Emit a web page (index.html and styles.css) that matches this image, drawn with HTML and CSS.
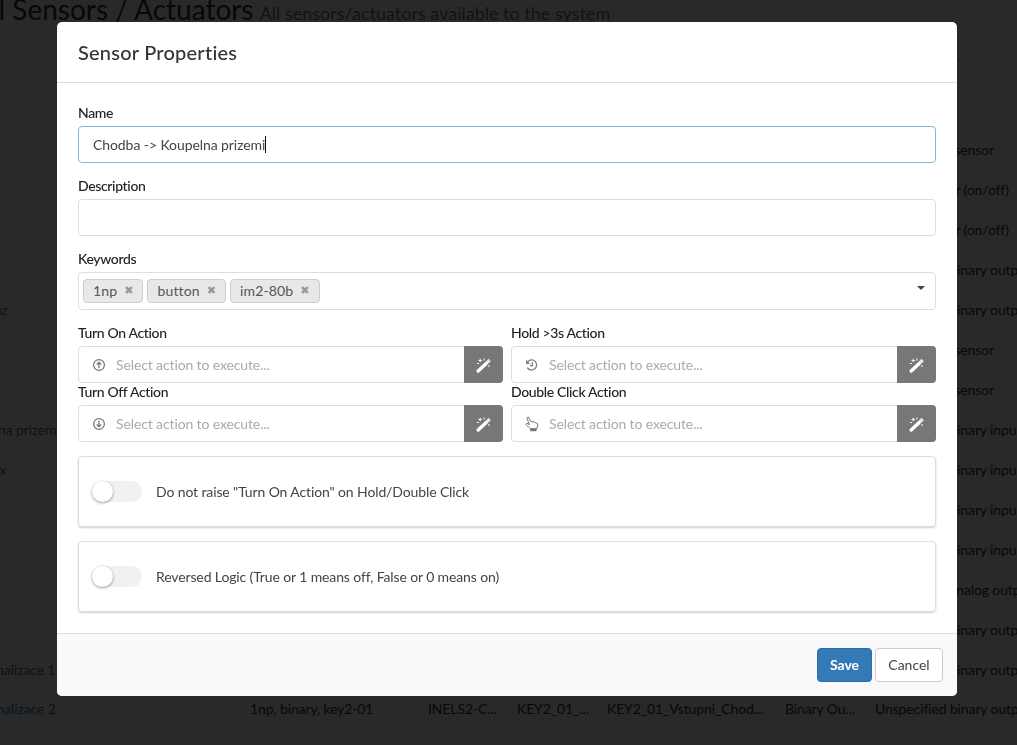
FILE: index.html
```html
<!DOCTYPE html>
<html lang="en">
<head>
<meta charset="utf-8">
<title>Sensors / Actuators</title>
<link rel="stylesheet" href="styles.css">
</head>
<body>
<main class="page">
  <header class="page-head">
    <h1 class="page-title">All Sensors / Actuators <small class="page-sub">All sensors/actuators available to the system</small></h1>
  </header>
  <div class="toolbar"><div class="search">Search...</div></div>
  <table class="grid">
    <colgroup><col class="c1"><col class="c2"><col class="c3"><col class="c4"><col class="c5"><col class="c6"><col class="c7"></colgroup>
    <thead><tr><th>Name</th><th>Keywords</th><th>Driver</th><th>Address</th><th>Label</th><th>Type</th><th>Description</th></tr></thead>
    <tbody>
      <tr><td></td><td></td><td></td><td></td><td></td><td></td><td>Temperature sensor</td></tr>
      <tr><td></td><td></td><td></td><td></td><td></td><td></td><td>Relay actuator (on/off)</td></tr>
      <tr><td></td><td></td><td></td><td></td><td></td><td></td><td>Relay actuator (on/off)</td></tr>
      <tr><td></td><td></td><td></td><td></td><td></td><td></td><td>Unspecified binary output</td></tr>
      <tr><td><a href="#">Osvetleni pro Garaz</a></td><td></td><td></td><td></td><td></td><td></td><td>Unspecified binary output</td></tr>
      <tr><td></td><td></td><td></td><td></td><td></td><td></td><td>Temperature sensor</td></tr>
      <tr><td></td><td></td><td></td><td></td><td></td><td></td><td>Temperature sensor</td></tr>
      <tr><td><a href="#">Chodba -&gt; Koupelna prizemi</a></td><td></td><td></td><td></td><td></td><td></td><td>Unspecified binary input</td></tr>
      <tr><td><a href="#">Kuchyn - Bojler box</a></td><td></td><td></td><td></td><td></td><td></td><td>Unspecified binary input</td></tr>
      <tr><td></td><td></td><td></td><td></td><td></td><td></td><td>Unspecified binary input</td></tr>
      <tr><td></td><td></td><td></td><td></td><td></td><td></td><td>Unspecified binary input</td></tr>
      <tr><td></td><td></td><td></td><td></td><td></td><td></td><td>Unspecified analog output</td></tr>
      <tr><td></td><td></td><td></td><td></td><td></td><td></td><td>Unspecified binary output</td></tr>
      <tr><td><a href="#">Vstupni dvere: Signalizace 1</a></td><td></td><td></td><td></td><td></td><td></td><td>Unspecified binary output</td></tr>
      <tr class="last"><td><a href="#">Vstupni dvere: Signalizace 2</a></td><td>1np, binary, key2-01</td><td>INELS2-C...</td><td>KEY2_01_...</td><td>KEY2_01_Vstupni_Chod...</td><td>Binary Ou...</td><td>Unspecified binary output</td></tr>
    </tbody>
  </table>
</main>

<div class="backdrop"></div>

<section class="modal">
  <header class="modal-head"><h2 class="modal-title">Sensor Properties</h2></header>
  <div class="modal-body">
    <div class="field">
      <label class="label">Name</label>
      <div class="control focused">Chodba -&gt; Koupelna prizemi<span class="caret"></span></div>
    </div>
    <div class="field">
      <label class="label">Description</label>
      <div class="control"></div>
    </div>
    <div class="field">
      <label class="label">Keywords</label>
      <div class="tags">
        <span class="tag">1np<span class="tag-x">✖</span></span>
        <span class="tag">button<span class="tag-x">✖</span></span>
        <span class="tag">im2-80b<span class="tag-x">✖</span></span>
        <span class="arrow"></span>
      </div>
    </div>
    <div class="actions">
      <div>
        <label class="label">Turn On Action</label>
        <div class="picker">
          <svg class="ico" viewBox="0 0 14 14"><circle cx="7" cy="7" r="5.4"/><path d="M7 10.2V4.4M4.7 6.6 7 4.2l2.3 2.4"/></svg>
          <span class="ph">Select action to execute...</span>
          <span class="wand"><svg viewBox="0 0 16 16"><path class="stick" d="M2.200 14 10.200 6.400"/><path class="tip" d="M11.200 5.400 13.800 3"/><path class="spark" d="M2.500 3.500h3.500M4.200 1.800v3.400M8 1.500v2M13 8v2M1 6.500h2"/></svg></span>
        </div>
      </div>
      <div>
        <label class="label">Hold &gt;3s Action</label>
        <div class="picker">
          <svg class="ico" viewBox="0 0 14 14"><path d="M2.900 3.600A5 5 0 1 1 2.300 9.600"/><path class="solid" d="M1.200 1.800 5.300 5.700 1.200 5.900z"/><path d="M7.300 4.200V7.500H5"/></svg>
          <span class="ph">Select action to execute...</span>
          <span class="wand"><svg viewBox="0 0 16 16"><path class="stick" d="M2.200 14 10.200 6.400"/><path class="tip" d="M11.200 5.400 13.800 3"/><path class="spark" d="M2.500 3.500h3.500M4.200 1.800v3.400M8 1.500v2M13 8v2M1 6.500h2"/></svg></span>
        </div>
      </div>
      <div>
        <label class="label">Turn Off Action</label>
        <div class="picker">
          <svg class="ico" viewBox="0 0 14 14"><circle cx="7" cy="7" r="5.4"/><path d="M7 3.800V9.600M4.700 7.400 7 9.800l2.300-2.400"/></svg>
          <span class="ph">Select action to execute...</span>
          <span class="wand"><svg viewBox="0 0 16 16"><path class="stick" d="M2.200 14 10.200 6.400"/><path class="tip" d="M11.200 5.400 13.800 3"/><path class="spark" d="M2.500 3.500h3.500M4.200 1.800v3.400M8 1.500v2M13 8v2M1 6.500h2"/></svg></span>
        </div>
      </div>
      <div>
        <label class="label">Double Click Action</label>
        <div class="picker">
          <svg class="ico hand" viewBox="0 0 14 16"><path d="M3 .8 6 5.600 9 5.800 12.800 8 12 12.600H5.200L.8 8.200l1-1L4.400 8.600 1.800 2z"/><path class="solid" d="M5.200 13h6.400v2.200H5.200z"/></svg>
          <span class="ph">Select action to execute...</span>
          <span class="wand"><svg viewBox="0 0 16 16"><path class="stick" d="M2.200 14 10.200 6.400"/><path class="tip" d="M11.200 5.400 13.800 3"/><path class="spark" d="M2.500 3.500h3.500M4.200 1.800v3.400M8 1.500v2M13 8v2M1 6.500h2"/></svg></span>
        </div>
      </div>
    </div>
    <div class="card"><span class="switch"><span class="knob"></span></span><span class="card-text">Do not raise "Turn On Action" on Hold/Double Click</span></div>
    <div class="card"><span class="switch"><span class="knob"></span></span><span class="card-text">Reversed Logic (True or 1 means off, False or 0 means on)</span></div>
  </div>
  <footer class="modal-foot">
    <button class="btn save">Save</button>
    <button class="btn cancel">Cancel</button>
  </footer>
</section>
</body>
</html>
```
FILE: styles.css
```css
* { box-sizing: border-box; }
html, body { margin: 0; height: 100%; overflow: hidden; background: #fff; }
body { font: 14px/20px Lato, "Open Sans", sans-serif; color: #333; letter-spacing: -.12px; }

.page { width: 1132px; margin-left: -115px; height: 745px; overflow: hidden; }
.page-head { display: flow-root; height: 29px; border-bottom: 1px solid #ddd; padding-left: 88px; }
.page-title { margin: -9px 0 0; font-size: 28px; line-height: 36px; font-weight: 400; white-space: nowrap; letter-spacing: 0; }
.page-sub { font-size: 18px; color: #777; margin-left: -1px; }
.toolbar { height: 53px; padding-top: 9px; border-bottom: 1px solid #ddd; }
.search { height: 36px; border: 1px solid #ddd; border-right: 0; margin-left: 900px; padding: 7px 12px; color: #999; white-space: nowrap; width: 232px; text-indent: 113px; overflow: hidden; }
.grid { border-collapse: collapse; table-layout: fixed; width: 1132px; }
.c1 { width: 353px; } .c2 { width: 180px; } .c3 { width: 89px; } .c4 { width: 90px; }
.c5 { width: 178px; } .c6 { width: 88px; } .c7 { width: 154px; }
.grid th { height: 47px; color: transparent; border-bottom: 1px solid #ddd; }
.grid td { height: 40px; padding: 1px 9px 0; border-bottom: 1px solid #ddd; white-space: nowrap; overflow: hidden; }
.grid td:first-child { padding-left: 3px; }
.grid td:last-child { padding-left: 11px; border-right: 1px solid #ddd; }
.grid tr.last td { height: 45px; border-left: 1px solid #eee; padding-top: 0; padding-bottom: 5px; }
.grid tr.last td:nth-child(2) { padding-left: 11px; }
.grid a { color: #337ab7; text-decoration: none; }

.backdrop { position: fixed; inset: 0; background: rgba(0, 0, 0, .84); }

.modal { position: absolute; left: 57px; top: 22px; width: 900px; height: 674px; background: #fff; border-radius: 5px; display: flex; flex-direction: column; overflow: hidden; }
.modal-head { height: 61px; border-bottom: 1px solid #ddd; padding: 0 21px; display: flex; align-items: center; }
.modal-title { margin: 0; font-size: 20px; font-weight: 500; color: #333; letter-spacing: .22px; }
.modal-body { flex: 1; padding: 20px 21px 0; }
.modal-foot { height: 63px; background: #f8f9fa; border-top: 1px solid #dcdee0; padding: 14px 14px 0 0; display: flex; justify-content: flex-end; gap: 3px; }

.field { margin-bottom: 13px; }
.label { display: block; height: 23px; line-height: 20px; font-weight: 500; color: #222; letter-spacing: -.35px; }
.control { height: 37px; border: 1px solid #ddd; border-radius: 4px; padding: 8px 14px; color: #444; display: flex; align-items: center; letter-spacing: -.08px; }
.control.focused { border-color: #7eb7dd; }
.caret { display: inline-block; width: 1px; height: 17px; background: #111; }

.tags { position: relative; height: 38px; margin-bottom: 0; border: 1px solid #ddd; border-radius: 4px; padding: 6px 4px; display: flex; gap: 4px; }
.tag { height: 24px; line-height: 22px; border: 1px solid #ccc; border-radius: 4px; background: #e8e8e8; color: #555; padding: 0 9px; display: flex; gap: 7px; white-space: nowrap; letter-spacing: .15px; }
.tag-x { font-family: "DejaVu Sans", sans-serif; font-size: 11px; color: #999; letter-spacing: 0; }
.arrow { position: absolute; right: 10px; top: 13px; border: 4px solid transparent; border-top: 4px solid #444; border-bottom: 0; }

.actions { display: grid; grid-template-columns: 425px 425px; column-gap: 8px; row-gap: 0; margin-top: -13px; padding-top: 13px; margin-bottom: 15px; }
.actions > div { height: 59px; }
.picker { height: 37px; border: 1px solid #ddd; border-radius: 4px; display: flex; align-items: center; padding-left: 13px; position: relative; }
.ico { width: 14px; height: 14px; fill: none; stroke: #777; stroke-width: 1.25; flex: none; }
.ico.hand { height: 16px; stroke-width: 1; }
.ico .solid { fill: #777; stroke: none; }
.ph { margin-left: 10px; color: #aaa; }
.wand { position: absolute; right: -1px; top: -1px; width: 39px; height: 37px; background: #777; border-radius: 0 4px 4px 0; display: flex; align-items: center; justify-content: center; }
.wand svg { width: 16px; height: 16px; fill: none; stroke: #fff; }
.stick { stroke-width: 3.4; stroke-linecap: round; }
.tip { stroke-width: 3.4; opacity: .8; }
.spark { stroke-width: 1.1; opacity: .9; }

.card { height: 71px; margin-bottom: 14px; border: 1px solid #ddd; border-radius: 4px; box-shadow: 0 1px 2px rgba(0, 0, 0, .2); display: flex; align-items: center; padding-left: 13px; }
.switch { width: 50px; height: 21px; border-radius: 11px; background: #f1f1f1; position: relative; flex: none; }
.knob { position: absolute; left: 0; top: 0; width: 21px; height: 21px; border-radius: 50%; background: #fff; box-shadow: 0 1px 3px rgba(0, 0, 0, .4); }
.card-text { margin-left: 14px; color: #444; }

.btn { height: 34px; border-radius: 4px; font: inherit; padding: 0; letter-spacing: 0; }
.save { width: 55px; background: #337ab7; border: 1px solid #2e6da4; color: #fff; font-weight: 700; }
.cancel { width: 68px; background: #fff; border: 1px solid #ccc; color: #444; }
```
